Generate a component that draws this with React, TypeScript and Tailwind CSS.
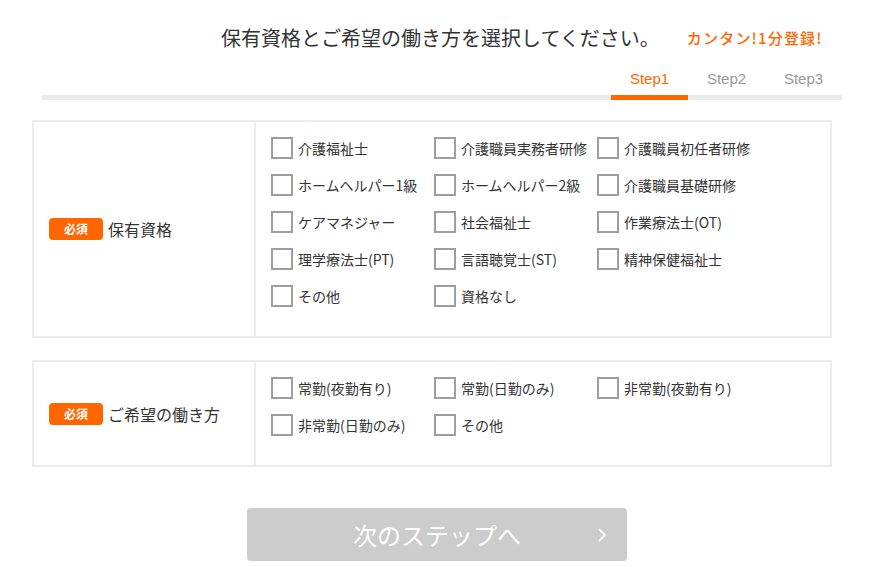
import React from "react";

const qualifications = [
  "介護福祉士",
  "介護職員実務者研修",
  "介護職員初任者研修",
  "ホームヘルパー1級",
  "ホームヘルパー2級",
  "介護職員基礎研修",
  "ケアマネジャー",
  "社会福祉士",
  "作業療法士(OT)",
  "理学療法士(PT)",
  "言語聴覚士(ST)",
  "精神保健福祉士",
  "その他",
  "資格なし",
];

const workStyles = [
  "常勤(夜勤有り)",
  "常勤(日勤のみ)",
  "非常勤(夜勤有り)",
  "非常勤(日勤のみ)",
  "その他",
];

function CheckItem({ label }: { label: string }) {
  return (
    <label className="flex h-[22px] items-center gap-[5px] cursor-pointer">
      <span className="block h-[22px] w-[22px] shrink-0 border-2 border-[#9e9e9e] bg-white" />
      <span className="text-[14px] leading-[22px] text-[#333] whitespace-nowrap">{label}</span>
    </label>
  );
}

function Section({ title, items }: { title: string; items: string[] }) {
  return (
    <div className="ml-[32px] flex w-[800px] border-2 border-[#ececec] bg-white">
      <div className="flex w-[222px] shrink-0 items-center border-r-2 border-[#ececec] pl-[15px]">
        <span className="flex h-[22px] w-[54px] items-center justify-center rounded-[4px] bg-[#ff6600] text-[12px] font-bold leading-none text-white">
          必須
        </span>
        <span className="ml-[5px] text-[16px] leading-[22px] text-[#333]">{title}</span>
      </div>
      <div className="grid grid-cols-[163px_163px_163px] gap-y-[15px] pl-[15px] pt-[15px] pb-[29px]">
        {items.map((it, i) => (
          <CheckItem key={i} label={it} />
        ))}
      </div>
    </div>
  );
}

export default function App() {
  return (
    <div
      className="min-h-[567px] w-[884px] bg-white"
      style={{ fontFamily: '"Noto Sans CJK JP", "Noto Sans", sans-serif' }}
    >
      <div className="flex items-center pl-[221px] pt-[26px]">
        <h1 className="text-[20px] font-normal leading-[24px] text-[#333]">
          保有資格とご希望の働き方を選択してください。
        </h1>
        <span className="ml-[27px] text-[15px] font-medium leading-[24px] tracking-[1.2px] text-[#ff6600]">
          カンタン!1分登録!
        </span>
      </div>

      <div className="mx-[42px] mt-[19px] flex justify-end border-b-[5px] border-[#ebebeb]">
        {["Step1", "Step2", "Step3"].map((s, i) => (
          <div
            key={s}
            className={
              i === 0
                ? "-mb-[5px] w-[77px] border-b-[5px] border-[#ff6600] pb-[6px] text-center text-[15px] leading-[20px] text-[#ff6600]"
                : "-mb-[5px] w-[77px] border-b-[5px] border-transparent pb-[6px] text-center text-[15px] leading-[20px] text-[#999]"
            }
            style={{ fontFamily: '"Liberation Sans", Arial, sans-serif' }}
          >
            {s}
          </div>
        ))}
      </div>

      <div className="mt-[20px]">
        <Section title="保有資格" items={qualifications} />
      </div>
      <div className="mt-[22px]">
        <Section title="ご希望の働き方" items={workStyles} />
      </div>

      <div className="mt-[41px] ml-[247px] flex h-[53px] w-[380px] items-center justify-center rounded-[4px] bg-[#cccccc] relative">
        <span className="text-[24px] leading-none text-white">次のステップへ</span>
        <svg
          className="absolute right-[20px] top-1/2 -translate-y-1/2"
          width="10"
          height="16"
          viewBox="0 0 10 16"
          fill="none"
        >
          <path d="M2 2 L8 8 L2 14" stroke="white" strokeWidth="1.8" />
        </svg>
      </div>
    </div>
  );
}
